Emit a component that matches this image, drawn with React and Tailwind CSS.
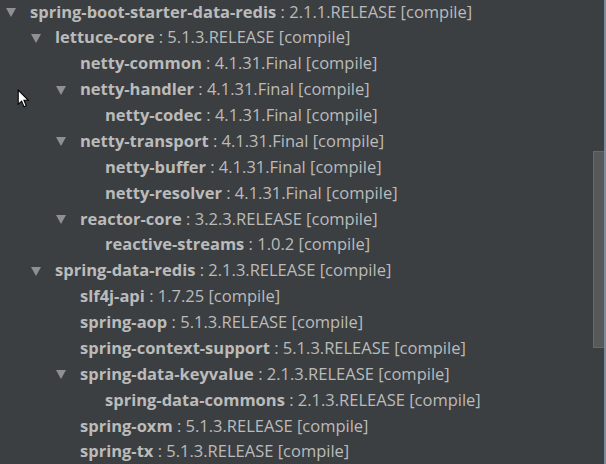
import React from 'react';

const rows = [
  { level: 0, open: true, name: 'spring-boot-starter-data-redis', ver: '2.1.1.RELEASE [compile]' },
  { level: 1, open: true, name: 'lettuce-core', ver: '5.1.3.RELEASE [compile]' },
  { level: 2, name: 'netty-common', ver: '4.1.31.Final [compile]' },
  { level: 2, open: true, name: 'netty-handler', ver: '4.1.31.Final [compile]' },
  { level: 3, name: 'netty-codec', ver: '4.1.31.Final [compile]' },
  { level: 2, open: true, name: 'netty-transport', ver: '4.1.31.Final [compile]' },
  { level: 3, name: 'netty-buffer', ver: '4.1.31.Final [compile]' },
  { level: 3, name: 'netty-resolver', ver: '4.1.31.Final [compile]' },
  { level: 2, open: true, name: 'reactor-core', ver: '3.2.3.RELEASE [compile]' },
  { level: 3, name: 'reactive-streams', ver: '1.0.2 [compile]' },
  { level: 1, open: true, name: 'spring-data-redis', ver: '2.1.3.RELEASE [compile]' },
  { level: 2, name: 'slf4j-api', ver: '1.7.25 [compile]' },
  { level: 2, name: 'spring-aop', ver: '5.1.3.RELEASE [compile]' },
  { level: 2, name: 'spring-context-support', ver: '5.1.3.RELEASE [compile]' },
  { level: 2, open: true, name: 'spring-data-keyvalue', ver: '2.1.3.RELEASE [compile]' },
  { level: 3, name: 'spring-data-commons', ver: '2.1.3.RELEASE [compile]' },
  { level: 2, name: 'spring-oxm', ver: '5.1.3.RELEASE [compile]' },
  { level: 2, name: 'spring-tx', ver: '5.1.3.RELEASE [compile]' },
];

const indent = ['pl-[30px]', 'pl-[55px]', 'pl-[80px]', 'pl-[105px]'];

const Arrow = () => (
  <svg width="10" height="9" viewBox="0 0 10 9" className="absolute -left-[24px] top-[9px]">
    <path d="M0 0 L10 0 L5 9 Z" fill="#8e9091" />
  </svg>
);

const Row = ({ level, open, name, ver }) => (
  <div className={`h-[25.88px] flex items-center ${indent[level]}`}>
    <div className="relative flex items-center whitespace-nowrap h-[26px]">
      {open && <Arrow />}
      <span className="font-bold">{name}</span>
      <span>&nbsp;: {ver}</span>
    </div>
  </div>
);

export default function App() {
  return (
    <div className="relative w-[606px] h-[464px] overflow-hidden bg-[#3c3f41] text-[#bbbbbb] text-[16.5px] flex" style={{ fontFamily: '"Open Sans", "Noto Sans", sans-serif' }}>
      <div className="flex-1 -mt-[1px]">
        {rows.map((r, i) => (
          <Row key={i} {...r} />
        ))}
      </div>
      <div className="w-[17px] relative">
        <div className="absolute left-[4px] top-[151px] w-[13px] h-[197px] bg-[#575859] border border-[#666869]" />
        <div className="absolute right-0 top-0 w-[2px] h-full bg-[#7d8b98]" />
      </div>
      <svg width="13" height="19" viewBox="0 0 12 18" className="absolute left-[17px] top-[89px]">
        <path d="M1 1 L1 14.5 L4.2 11.5 L6.5 16.8 L8.6 15.8 L6.4 10.7 L10.6 10.7 Z" fill="#fff" stroke="#000" strokeWidth="1" strokeLinejoin="miter" />
      </svg>
    </div>
  );
}
